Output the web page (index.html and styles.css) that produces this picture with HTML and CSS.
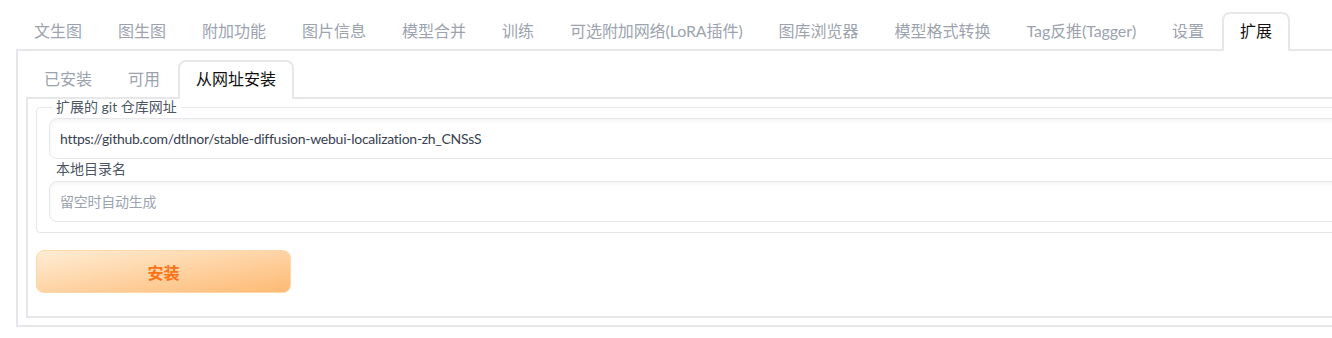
FILE: index.html
```html
<!DOCTYPE html>
<html lang="zh">

<head>
  <meta charset="UTF-8">
  <meta name="viewport" content="width=device-width, initial-scale=1.0">
  <title>扩展 - 从网址安装</title>
  <link rel="stylesheet" href="styles.css">
</head>

<body>
  <!-- 顶部标签页 -->
  <div class="tabs">
    <div class="tab-nav">
      <button class="tab">文生图</button>
      <button class="tab">图生图</button>
      <button class="tab">附加功能</button>
      <button class="tab">图片信息</button>
      <button class="tab">模型合并</button>
      <button class="tab">训练</button>
      <button class="tab latin">可选附加网络(LoRA插件)</button>
      <button class="tab">图库浏览器</button>
      <button class="tab">模型格式转换</button>
      <button class="tab latin">Tag反推(Tagger)</button>
      <button class="tab">设置</button>
      <button class="tab selected">扩展</button>
    </div>

    <div class="tab-panel outer-panel">
      <!-- 扩展子标签页 -->
      <div class="tabs">
        <div class="tab-nav">
          <button class="tab">已安装</button>
          <button class="tab">可用</button>
          <button class="tab selected">从网址安装</button>
        </div>

        <div class="tab-panel inner-panel">
          <fieldset class="form-box">
            <legend>扩展的 git 仓库网址</legend>
            <input type="text" class="text-input" value="https://github.com/dtlnor/stable-diffusion-webui-localization-zh_CNSsS">
            <label class="field-label">本地目录名</label>
            <input type="text" class="text-input" placeholder="留空时自动生成">
          </fieldset>

          <button class="primary-button">安装</button>
        </div>
      </div>
    </div>
  </div>
</body>

</html>
```

FILE: styles.css
```css
* {
  box-sizing: border-box;
  margin: 0;
  padding: 0;
}

html,
body {
  overflow: hidden;
}

body {
  background-color: #ffffff;
  color: #374151;
  font-family: 'Lato', 'Noto Sans CJK SC', sans-serif;
  padding: 12px 0 0 16px;
}

.tabs {
  width: 1400px;
}

.tabs .tabs {
  width: auto;
}

.tab-nav {
  display: flex;
  border-bottom: 2px solid #e5e7eb;
}

.tab {
  padding: 5px 16px 8px;
  margin-bottom: -2px;
  border: 2px solid transparent;
  border-bottom: none;
  border-radius: 8px 8px 0 0;
  background: none;
  color: #9ca3af;
  font-family: inherit;
  font-size: 16px;
  line-height: 24px;
  white-space: nowrap;
  cursor: pointer;
}

/* 拉丁字母略窄一些 */
.tab.latin {
  letter-spacing: -0.1px;
}

.tab.selected {
  border-color: #e5e7eb;
  background-color: #ffffff;
  color: #111111;
}

.tab-panel {
  border: 2px solid #e5e7eb;
  border-top: none;
}

.outer-panel {
  padding: 9px 8px 7px;
}

.inner-panel {
  padding: 0 8px 23px;
}

.form-box {
  border: 1px solid #e5e7eb;
  border-radius: 4px;
  padding: 0 12px 10px;
  display: flex;
  flex-direction: column;
}

.form-box legend {
  margin-left: 3px;
  padding: 0 4px;
  font-size: 14px;
  line-height: 16px;
  color: #4b5563;
}

.field-label {
  margin: 2px 0 4px 7px;
  font-size: 14px;
  line-height: 16px;
  color: #4b5563;
}

.text-input {
  margin-top: 3px;
  height: 41px;
  padding: 0 10px;
  border: 1px solid #e5e7eb;
  border-radius: 8px;
  box-shadow: inset 0 2px 4px rgba(0, 0, 0, 0.05);
  font-family: inherit;
  font-size: 14px;
  letter-spacing: -0.26px;
  color: #374151;
  outline: none;
}

.field-label + .text-input {
  margin-top: 0;
}

.text-input::placeholder {
  color: #9ca3af;
}

.primary-button {
  display: block;
  margin-top: 17px;
  width: 255px;
  height: 43px;
  border: 1px solid #fed7aa;
  border-radius: 8px;
  background: linear-gradient(to bottom right, #ffedd5, #fdba74);
  color: #f97316;
  font-family: inherit;
  font-size: 16px;
  font-weight: 600;
  cursor: pointer;
}
```
